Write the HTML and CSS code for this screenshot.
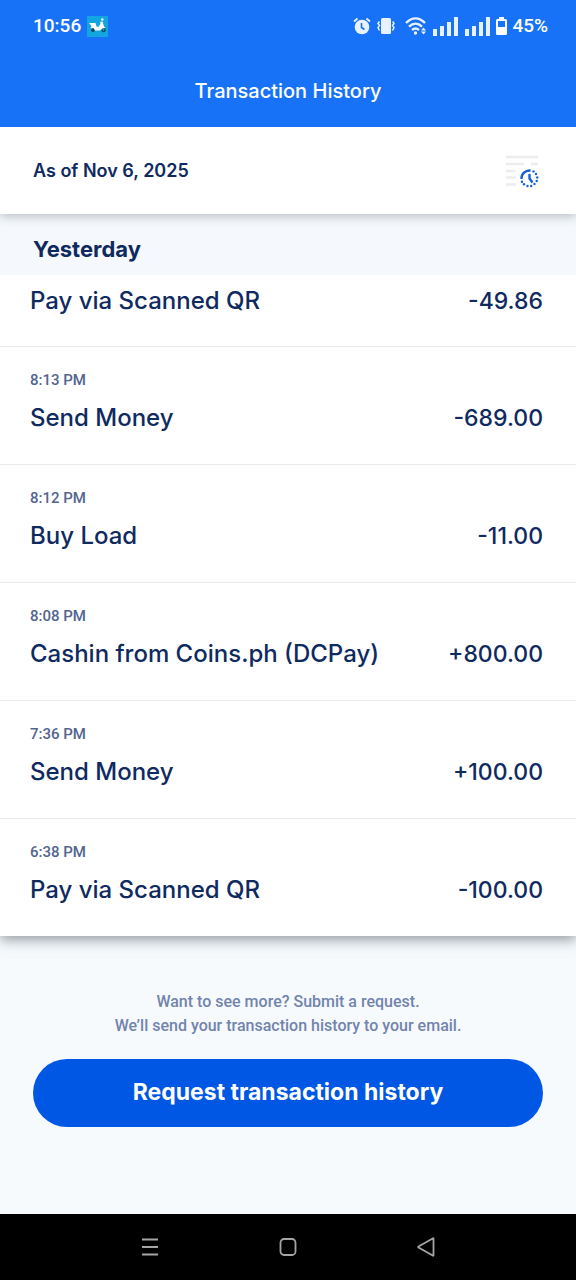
FILE: index.html
```html
<!DOCTYPE html>
<html lang="en">
<head>
<meta charset="utf-8">
<meta name="viewport" content="width=device-width, initial-scale=1">
<title>Transaction History</title>
<link rel="stylesheet" href="styles.css">
</head>
<body>
<div class="screen">
  <header class="top">
    <div class="status">
      <div class="status-left">
        <span class="clock">10:56</span>
        <svg class="app-badge" width="21" height="21" viewBox="0 0 21 21" aria-hidden="true">
          <rect width="21" height="21" fill="#12a5e0"/>
          <circle cx="6" cy="14" r="2" fill="#0b4a66"/><circle cx="16.500" cy="14" r="2.200" fill="#0b4a66"/>
          <path d="M2 7h6.500l1 3.500L11.500 11l2-3.500L13 6l2.500-.5 1.500 5 1.500 1.500-3 .5-2.500 2H8L6.500 12l-3 .5L4.500 10z" fill="#fff"/>
          <circle cx="15.300" cy="3.500" r="1.200" fill="#fff"/>
          <circle cx="16.500" cy="14" r=".9" fill="#12a5e0"/>
        </svg>
      </div>
      <div class="status-right">
        <svg width="18" height="18" viewBox="0 0 18 18" aria-hidden="true">
          <circle cx="9" cy="10" r="7.300" fill="#e8f2ff"/>
          <path d="M1 4.500 4.500 1.500M17 4.500 13.500 1.500" stroke="#e8f2ff" stroke-width="1.800" fill="none"/>
          <path d="M8.500 6v4.500l3 2" stroke="#1872f8" stroke-width="1.600" fill="none"/>
        </svg>
        <svg class="vibrate" width="18" height="18" viewBox="0 0 18 18" aria-hidden="true">
          <rect x="4" y="1" width="10" height="16" rx="1.500" fill="#e8f2ff"/>
          <path d="M2.300 4.500 1 6.500l1.500 2L1 10.500l1.500 3M15.700 4.500 17 6.500l-1.500 2 1.500 2-1.500 3" fill="none" stroke="#e8f2ff" stroke-width="1.500"/>
        </svg>
        <svg class="wifi" width="22" height="18" viewBox="0 0 22 18" aria-hidden="true">
          <path d="M1 6C7 0 14 0 20 6M4 9.700c4-4 9-4 13 0M7 13c2.500-2.300 4.500-2.300 7 0" fill="none" stroke="#e8f2ff" stroke-width="2.400"/>
          <circle cx="10.500" cy="16" r="1.700" fill="#e8f2ff"/>
          <path d="m16 13.500 2.500-3 2.500 3zM16 14.500h5l-2.500 3z" fill="#e8f2ff"/>
        </svg>
        <svg class="signal" width="25" height="20" viewBox="0 0 25 20" aria-hidden="true">
          <path d="M0 13h4v7H0zM7 10h4v10H7zM14 6h4v14h-4zM21 1h4v19h-4z" fill="#e8f2ff"/>
        </svg>
        <svg class="signal" width="25" height="20" viewBox="0 0 25 20" aria-hidden="true">
          <path d="M0 13h4v7H0zM7 10h4v10H7zM14 6h4v14h-4zM21 1h4v19h-4z" fill="#e8f2ff"/>
        </svg>
        <svg width="11" height="18" viewBox="0 0 11 18" aria-hidden="true">
          <path d="M3 0h5v2h1.500Q11 2 11 3.500v13Q11 18 9.500 18h-8Q0 18 0 16.500v-13Q0 2 1.500 2H3z" fill="#fff"/>
          <path d="M2 4h7v6H2z" fill="#1872f8"/>
        </svg>
        <span class="charge">45%</span>
      </div>
    </div>
    <h1 class="title">Transaction History</h1>
  </header>

  <section class="as-of">
    <p class="as-of-text">As of Nov 6, 2025</p>
    <button class="filter" type="button" aria-label="History period">
      <svg width="34" height="34" viewBox="0 0 34 34" aria-hidden="true">
        <path d="M1 3h32M1 10h18M26 10h7M1 17h10M1 23.500h10M1 30.500h10" stroke="#ededef" stroke-width="2.500" fill="none"/>
        <path d="M16.500 25A8 8 0 0 1 25.500 16.500" fill="none" stroke="#1560d4" stroke-width="2.400"/>
        <g fill="#1560d4">
          <circle cx="28.500" cy="17.400" r="1.200"/><circle cx="31" cy="20" r="1.200"/><circle cx="32.300" cy="23.500" r="1.200"/>
          <circle cx="31.700" cy="27" r="1.200"/><circle cx="29.500" cy="30" r="1.200"/><circle cx="26.200" cy="32" r="1.200"/>
          <circle cx="22.500" cy="32" r="1.200"/><circle cx="19" cy="30.300" r="1.200"/><circle cx="17" cy="27.800" r="1.200"/>
        </g>
        <path d="M24.500 20v4.500l3 4" stroke="#1560d4" stroke-width="2.400" fill="none"/>
      </svg>
    </button>
  </section>

  <main class="history">
    <h2 class="day">Yesterday</h2>
    <ul class="rows">
      <li class="row row-scrolled"><span class="name">Pay via Scanned QR</span><span class="amount">-49.86</span></li>
      <li class="row"><time class="time">8:13 PM</time><span class="name">Send Money</span><span class="amount">-689.00</span></li>
      <li class="row"><time class="time">8:12 PM</time><span class="name">Buy Load</span><span class="amount">-11.00</span></li>
      <li class="row"><time class="time">8:08 PM</time><span class="name">Cashin from Coins.ph (DCPay)</span><span class="amount">+800.00</span></li>
      <li class="row"><time class="time">7:36 PM</time><span class="name">Send Money</span><span class="amount">+100.00</span></li>
      <li class="row"><time class="time">6:38 PM</time><span class="name">Pay via Scanned QR</span><span class="amount">-100.00</span></li>
    </ul>
  </main>

  <section class="request">
    <p class="hint">Want to see more? Submit a request.<br>We’ll send your transaction history to your email.</p>
    <button class="request-button" type="button">Request transaction history</button>
  </section>

  <nav class="system-nav" aria-label="System">
    <button class="nav-button" type="button" aria-label="Recent apps">
      <svg width="18" height="18" viewBox="0 0 18 18" aria-hidden="true"><path d="M1 1.500h16M1 9h16M1 16.500h16" stroke="#a5a5a5" stroke-width="2"/></svg>
    </button>
    <button class="nav-button" type="button" aria-label="Home">
      <svg width="18" height="18" viewBox="0 0 18 18" aria-hidden="true"><rect x="1.500" y="1" width="15" height="16" rx="3.500" fill="none" stroke="#a5a5a5" stroke-width="1.800"/></svg>
    </button>
    <button class="nav-button" type="button" aria-label="Back">
      <svg width="18" height="20" viewBox="0 0 18 20" aria-hidden="true"><path d="M16.500 1.500v17q0 .5-.8 0L1.500 10.500q-.6-.5 0-1L15.700 1.500q.8-.5.8 0z" fill="none" stroke="#a5a5a5" stroke-width="1.800" stroke-linejoin="round"/></svg>
    </button>
  </nav>
</div>
</body>
</html>
```

FILE: styles.css
```css
* { box-sizing: border-box; }

body {
  margin: 0;
  background: #f6fafd;
  color: #0f2a5f;
  font-family: Inter, "Open Sans", sans-serif;
}

h1, h2, p, ul { margin: 0; padding: 0; }

button {
  border: 0;
  padding: 0;
  background: none;
  font: inherit;
  cursor: pointer;
}

svg { display: block; flex: none; }

.screen {
  display: flex;
  flex-direction: column;
  min-height: 100vh;
}

.top {
  background: #1872f8;
  color: #fff;
}

.status {
  display: flex;
  justify-content: space-between;
  align-items: center;
  height: 52px;
  padding: 0 28px 0 33px;
  font: 500 19px/24px Roboto, sans-serif;
}

.status-left, .status-right {
  display: flex;
  align-items: center;
  gap: 6px;
}

.wifi { margin-left: 4px; }
.signal + .signal { margin-left: 1px; }
.charge { margin-left: -1px; }

.title {
  padding: 25px 16px 22px;
  font-size: 20px;
  font-weight: 500;
  line-height: 28px;
  text-align: center;
}

.as-of {
  position: relative;
  z-index: 1;
  display: flex;
  justify-content: space-between;
  align-items: center;
  height: 87px;
  padding: 0 37px 0 33px;
  background: #fff;
  box-shadow: 0 2px 10px rgba(60, 65, 75, 0.35);
  clip-path: inset(0 0 -16px 0);
}

.as-of-text {
  font-size: 18px;
  font-weight: 600;
  line-height: 24px;
}

.day {
  padding: 19px 33px 10px;
  background: #f5f9fd;
  font-size: 22px;
  font-weight: 700;
  line-height: 32px;
}

.history {
  position: relative;
  box-shadow: 0 4px 12px rgba(60, 65, 75, 0.5);
}

.rows {
  background: #fff;
  list-style: none;
}

.row {
  display: grid;
  grid-template-columns: 1fr auto;
  row-gap: 12px;
  padding: 23px 33px 30px 30px;
  border-bottom: 1px solid #e9ebee;
}

.row:last-child { border-bottom: 0; }

.row-scrolled { padding-top: 10px; padding-bottom: 29px; }

.time {
  grid-column: 1 / -1;
  color: #53658f;
  font: 500 15px/20px Roboto, sans-serif;
}

.name, .amount {
  font-size: 24px;
  font-weight: 500;
  line-height: 32px;
}

.amount { font-size: 23px; }

.request {
  flex: 1;
  padding: 54px 33px 80px;
  background: #f6fafd;
}

.hint {
  color: #7284ad;
  font: 500 16px/24px Roboto, sans-serif;
  text-align: center;
}

.request-button {
  width: 100%;
  margin-top: 21px;
  padding: 17px 24px 19px;
  border-radius: 34px;
  background: #0057e4;
  color: #fff;
  font-size: 23px;
  font-weight: 700;
  line-height: 32px;
}

.system-nav {
  display: flex;
  justify-content: center;
  gap: 74px;
  height: 66px;
  background: #000;
}

.nav-button {
  display: grid;
  place-items: center;
  width: 64px;
}
```
